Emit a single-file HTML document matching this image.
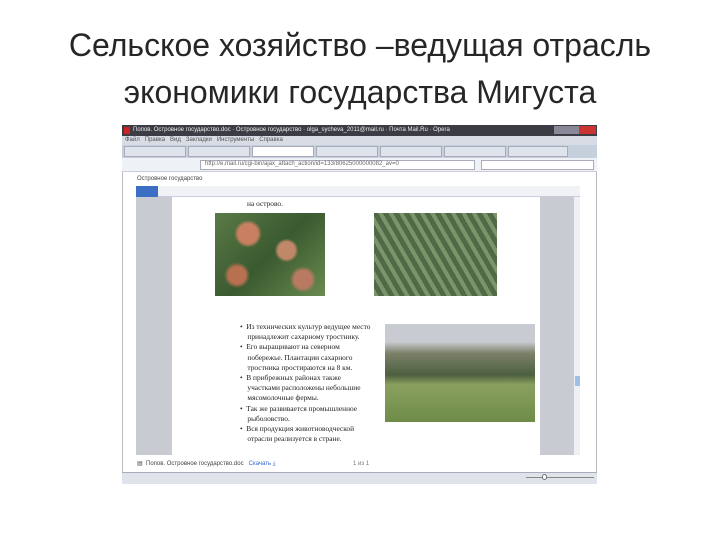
<!DOCTYPE html>
<html><head><meta charset="utf-8"><style>
*{margin:0;padding:0;box-sizing:border-box}
body{width:720px;height:540px;background:#fff;position:relative;overflow:hidden;font-family:"Liberation Sans",sans-serif}
.t{position:absolute;left:0;width:720px;text-align:center;font-size:32px;color:#262626;line-height:1}
.a{position:absolute}
.sm{font-size:6px;color:#333;white-space:nowrap}
.doc{font-family:"Liberation Serif",serif;font-size:7.4px;color:#222;line-height:10.2px}
</style></head><body>
<div class="t" style="top:29px">Сельское хозяйство –ведущая отрасль</div>
<div class="t" style="top:76px">экономики государства Мигуста</div>

<div class="a" style="left:122px;top:125px;width:475px;height:359px;background:#fff;border:1px solid #bbb"></div>
<div class="a" style="left:122px;top:125px;width:475px;height:11px;background:#3c3c44"></div>
<div class="a sm" style="left:133px;top:127px;color:#eee">Попов. Островное государство.doc · Островное государство · olga_sycheva_2011@mail.ru · Почта Mail.Ru · Opera</div>
<div class="a" style="left:124px;top:127px;width:6px;height:7px;background:#c22"></div>
<div class="a" style="left:554px;top:126px;width:42px;height:8px;background:linear-gradient(90deg,#889 0 60%,#c33 60%)"></div>
<div class="a" style="left:122px;top:136px;width:475px;height:9px;background:#d8dce4"></div>
<div class="a sm" style="left:125px;top:137px;color:#555">Файл &nbsp; Правка &nbsp; Вид &nbsp; Закладки &nbsp; Инструменты &nbsp; Справка</div>
<div class="a" style="left:122px;top:145px;width:475px;height:13px;background:#c6cfdc"></div>
<div class="a" style="left:124px;top:146px;width:62px;height:11px;background:#dfe4ec;border:1px solid #aab"></div>
<div class="a" style="left:188px;top:146px;width:62px;height:11px;background:#dfe4ec;border:1px solid #aab"></div>
<div class="a" style="left:252px;top:146px;width:62px;height:11px;background:#fff;border:1px solid #aab"></div>
<div class="a" style="left:316px;top:146px;width:62px;height:11px;background:#dfe4ec;border:1px solid #aab"></div>
<div class="a" style="left:380px;top:146px;width:62px;height:11px;background:#dfe4ec;border:1px solid #aab"></div>
<div class="a" style="left:444px;top:146px;width:62px;height:11px;background:#dfe4ec;border:1px solid #aab"></div>
<div class="a" style="left:508px;top:146px;width:60px;height:11px;background:#dfe4ec;border:1px solid #aab"></div>
<div class="a" style="left:122px;top:158px;width:475px;height:14px;background:#eef1f5;border-bottom:1px solid #ccd"></div>
<div class="a" style="left:200px;top:160px;width:275px;height:10px;background:#fff;border:1px solid #aab"></div>
<div class="a sm" style="left:205px;top:161px;color:#666">http://e.mail.ru/cgi-bin/ajax_attach_action/id=133/80625000000082_av=0</div>
<div class="a" style="left:481px;top:160px;width:113px;height:10px;background:#fff;border:1px solid #aab"></div>
<div class="a sm" style="left:137px;top:176px;color:#444">Островное государство</div>
<div class="a" style="left:136px;top:186px;width:444px;height:11px;background:#f0f2f6;border-bottom:1px solid #ccd"></div>
<div class="a" style="left:136px;top:186px;width:22px;height:11px;background:#3a6fc4"></div>
<div class="a" style="left:136px;top:197px;width:444px;height:258px;background:#c8ccd2"></div>
<div class="a" style="left:172px;top:197px;width:368px;height:258px;background:#fff"></div>
<div class="a" style="left:574px;top:197px;width:6px;height:258px;background:#eef0f3"></div>
<div class="a" style="left:575px;top:376px;width:5px;height:10px;background:#9cc0e6"></div>
<div class="a doc" style="left:247px;top:199px">на острово.</div>
<div class="a" style="left:215px;top:213px;width:110px;height:83px;background:radial-gradient(circle at 30% 25%,#c88060 0 10%,transparent 14%),radial-gradient(circle at 65% 45%,#c08868 0 10%,transparent 14%),radial-gradient(circle at 20% 75%,#b87050 0 8%,transparent 12%),radial-gradient(circle at 80% 80%,#b87a60 0 8%,transparent 12%),linear-gradient(135deg,#5a7a48,#3a5a30 50%,#6a8a50)"></div>
<div class="a" style="left:374px;top:213px;width:123px;height:83px;background:repeating-linear-gradient(60deg,#6c8a5a 0 4px,#3e5a34 4px 9px),#4a6a40;opacity:.9"></div>
<div class="a" style="left:385px;top:324px;width:150px;height:98px;background:linear-gradient(180deg,#c8ccd2 0 18%,#7a8068 30%,#4e6040 52%,#8aa060 62%,#6e8c48 100%)"></div>
<div class="a doc" style="left:240px;top:322px;width:145px">
<div>• &nbsp;Из технических культур ведущее место<br>&nbsp;&nbsp;&nbsp;&nbsp;принадлежит сахарному тростнику.</div>
<div>• &nbsp;Его выращивают на северном<br>&nbsp;&nbsp;&nbsp;&nbsp;побережье. Плантации сахарного<br>&nbsp;&nbsp;&nbsp;&nbsp;тростника простираются на 8 км.</div>
<div>• &nbsp;В прибрежных районах также<br>&nbsp;&nbsp;&nbsp;&nbsp;участками расположены небольшие<br>&nbsp;&nbsp;&nbsp;&nbsp;мясомолочные фермы.</div>
<div>• &nbsp;Так же развивается промышленное<br>&nbsp;&nbsp;&nbsp;&nbsp;рыболовство.</div>
<div>• &nbsp;Вся продукция животноводческой<br>&nbsp;&nbsp;&nbsp;&nbsp;отрасли реализуется в стране.</div>
</div>
<div class="a sm" style="left:137px;top:460px;color:#444">▤ &nbsp;Попов. Островное государство.doc &nbsp; <span style="color:#36c">Скачать ⤓</span></div>
<div class="a sm" style="left:353px;top:461px;color:#777">1 из 1</div>
<div class="a" style="left:122px;top:472px;width:475px;height:12px;background:#dfe3ea;border-top:1px solid #aab"></div>
<div class="a" style="left:526px;top:477px;width:68px;height:1px;background:#888"></div>
<div class="a" style="left:542px;top:474px;width:5px;height:6px;background:#fff;border:1px solid #777;border-radius:3px"></div>
</body></html>
